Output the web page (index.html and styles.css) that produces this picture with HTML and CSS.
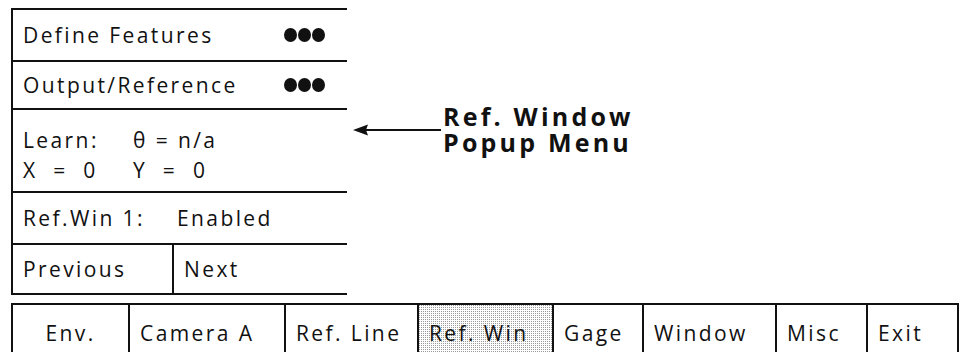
FILE: index.html
```html
<!DOCTYPE html>
<html lang="en">
<head>
  <meta charset="UTF-8" />
  <meta name="viewport" content="width=device-width, initial-scale=1.0" />
  <title>Ref. Window Popup Menu</title>
  <link rel="stylesheet" href="styles.css">
</head>
<body>
  <div class="top">
    <div class="popup">
      <div class="row tall">
        <span>Define Features</span>
        <span class="dots"><i></i><i></i><i></i></span>
      </div>
      <div class="row">
        <span>Output/Reference</span>
        <span class="dots"><i></i><i></i><i></i></span>
      </div>
      <div class="learn">
        <span>Learn:</span><span>&theta; = n/a</span>
        <span>X &nbsp;= &nbsp;0</span><span>Y &nbsp;= &nbsp;0</span>
      </div>
      <div class="row tall">
        <span class="key">Ref.Win 1:</span><span class="grow">Enabled</span>
      </div>
      <div class="pair">
        <div class="cell">Previous</div>
        <div class="cell next">Next</div>
      </div>
    </div>

    <div class="callout">
      <svg class="arrow" width="88" height="14" viewBox="0 0 88 14">
        <line x1="12" y1="7" x2="88" y2="7" stroke="#111" stroke-width="2" />
        <polygon points="0,7 15,1.5 13,7 15,12.5" fill="#111" />
      </svg>
      <div class="label">Ref. Window<br>Popup Menu</div>
    </div>
  </div>

  <div class="menubar">
    <div class="tab env">Env.</div>
    <div class="tab">Camera A</div>
    <div class="tab">Ref. Line</div>
    <div class="tab active">Ref. Win</div>
    <div class="tab">Gage</div>
    <div class="tab">Window</div>
    <div class="tab">Misc</div>
    <div class="tab last">Exit</div>
  </div>
</body>
</html>
```

FILE: styles.css
```css
html, body {
  overflow: hidden;
}
body {
  margin: 0;
  padding: 8px 0 0 11px;
  background: #fff;
  color: #111;
  font-family: "Open Sans", "Liberation Sans", sans-serif;
  font-size: 21px;
  letter-spacing: 2.4px;
  line-height: 26px;
}
.top {
  display: flex;
}
.popup {
  width: 336px;
  box-sizing: border-box;
  border: 2px solid #111;
  border-right: none;
}
.row {
  display: flex;
  align-items: center;
  height: 46px;
  padding: 0 22px 0 10px;
  border-bottom: 2px solid #111;
}
.row.tall {
  height: 50px;
}
.row .dots {
  margin-left: auto;
}
.dots {
  display: flex;
  gap: 1px;
}
.dots i {
  width: 13px;
  height: 14px;
  border-radius: 50%;
  background: #111;
}
.key {
  width: 154px;
  flex-shrink: 0;
}
.learn {
  display: grid;
  grid-template-columns: 110px auto;
  line-height: 30px;
  height: 83px;
  box-sizing: border-box;
  padding: 15px 10px 8px;
  border-bottom: 2px solid #111;
}
.pair {
  display: grid;
  grid-template-columns: 159px auto;
  height: 48px;
}
.cell {
  display: flex;
  align-items: center;
  padding-left: 10px;
}
.cell.next {
  border-left: 2px solid #111;
  padding-left: 10px;
}
.callout {
  display: flex;
  align-items: center;
  margin: 95px 0 0 6px;
  align-self: flex-start;
}
.arrow {
  display: block;
  margin-top: 2px;
}
.label {
  margin-left: 2px;
  font-weight: 700;
  font-size: 25px;
  line-height: 26px;
  letter-spacing: 3.2px;
}
.menubar {
  display: grid;
  grid-template-columns: 117px 156px 133px 135px 90px 133px 91px 93px;
  margin-top: 8px;
  height: 49px;
}
.tab {
  border-top: 2px solid #111;
  border-left: 2px solid #111;
  padding: 15px 0 0 10px;
}
.tab.env {
  padding-left: 0;
  text-align: center;
}
.tab.last {
  border-right: 2px solid #111;
}
.tab.active {
  background-color: #fff;
  background-image: conic-gradient(from 270deg at 1px 1px, #999 25%, transparent 0);
  background-size: 2px 2px;
}
```
